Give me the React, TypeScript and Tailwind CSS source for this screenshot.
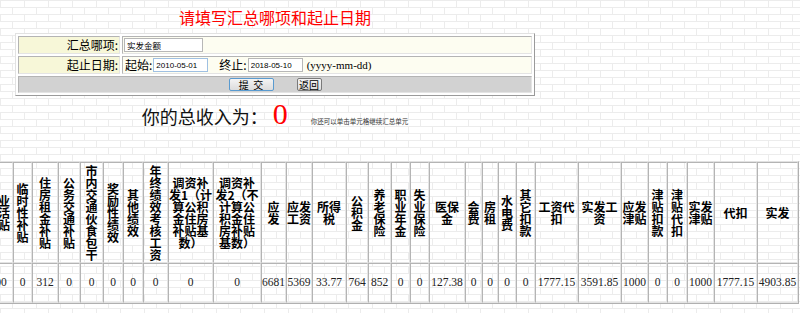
import React from 'react';

const columns = [
  { w: 'w-[30px]', head: '职业|生活|补贴', val: '200' },
  { w: 'w-[19px]', head: '临|时|性|补|贴', val: '0' },
  { w: 'w-[26px]', head: '住|房|租|金|补|贴', val: '312' },
  { w: 'w-[22px]', head: '公|务|交|通|补|贴', val: '0' },
  { w: 'w-[23px]', head: '市|内|交|通|伙|食|包|干', val: '0' },
  { w: 'w-[20px]', head: '奖|励|性|绩|效', val: '0' },
  { w: 'w-[20px]', head: '其|他|绩|效', val: '0' },
  { w: 'w-[25px]', head: '年|终|绩|效|考|核|工|资', val: '0' },
  { w: 'w-[45px]', head: '调资补|发1（计|算公积|金住房|补贴基|数）', val: '0' },
  { w: 'w-[48px]', head: '调资补|发2（不|计算公|积金住|房补贴|基数）', val: '0' },
  { w: 'w-[25px]', head: '应|发', val: '6681' },
  { w: 'w-[26px]', head: '应发|工资', val: '5369' },
  { w: 'w-[34px]', head: '所得|税', val: '33.77' },
  { w: 'w-[22px]', head: '公|积|金', val: '764' },
  { w: 'w-[23px]', head: '养|老|保|险', val: '852' },
  { w: 'w-[19px]', head: '职|业|年|金', val: '0' },
  { w: 'w-[19px]', head: '失|业|保|险', val: '0' },
  { w: 'w-[36px]', head: '医保|金', val: '127.38' },
  { w: 'w-[17px]', head: '会|费', val: '0' },
  { w: 'w-[16px]', head: '房|租', val: '0' },
  { w: 'w-[18px]', head: '水|电|费', val: '0' },
  { w: 'w-[19px]', head: '其|它|扣|款', val: '0' },
  { w: 'w-[43px]', head: '工资代|扣', val: '1777.15' },
  { w: 'w-[43px]', head: '实发工|资', val: '3591.85' },
  { w: 'w-[27px]', head: '应发|津贴', val: '1000' },
  { w: 'w-[19px]', head: '津|贴|扣|款', val: '0' },
  { w: 'w-[20px]', head: '津|贴|代|扣', val: '0' },
  { w: 'w-[27px]', head: '实发|津贴', val: '1000' },
  { w: 'w-[43px]', head: '代扣', val: '1777.15' },
  { w: 'w-[41px]', head: '实发', val: '4903.85' },
];

const cellBorder =
  'border border-t-[#b4b4b4] border-l-[#b4b4b4] border-r-[#e4e4e4] border-b-[#e4e4e4]';

const App: React.FC = () => {
  return (
    <div className="w-[800px] h-[313px] overflow-hidden bg-white bg-[image:linear-gradient(#ececec_1px,transparent_1px),conic-gradient(at_1px_7px,transparent_270deg,#ececec_270deg),conic-gradient(at_1px_7px,transparent_180deg,#ececec_180deg_270deg,transparent_270deg)] bg-[length:24px_7px,24px_14px,24px_14px] bg-[position:0_0,0_0,12px_0] font-['Noto_Sans_CJK_SC','Noto_Sans_CJK_JP',sans-serif] text-black pt-[7px]">
      <div className="ml-[15px] w-[520px]">
        <div className="h-[20px] leading-[20px] text-[16px] text-center text-[#ff0000]">
          请填写汇总哪项和起止日期
        </div>

        <table className="mt-[6px] w-[520px] border-separate border-spacing-[2px] border border-t-[#e2e2e2] border-l-[#e2e2e2] border-r-[#9a9a9a] border-b-[#9a9a9a] bg-white">
          <tbody>
            <tr>
              <td className={`w-[102px] h-[18px] p-0 pr-[1px] text-right text-[12px] leading-none bg-[#f7f7d8] ${cellBorder}`}>
                汇总哪项:
              </td>
              <td className={`h-[18px] p-0 pl-[1px] bg-[#fdfdf1] ${cellBorder}`}>
                <input
                  readOnly
                  value="实发金额"
                  className="block w-[79px] h-[14px] px-[2px] text-[8.5px] bg-white border border-[#b7b7b7] outline-none"
                />
              </td>
            </tr>
            <tr>
              <td className={`h-[18px] p-0 pr-[1px] text-right text-[12px] leading-none bg-[#f7f7d8] ${cellBorder}`}>
                起止日期:
              </td>
              <td className={`h-[18px] p-0 pl-[2px] bg-[#fdfdf1] ${cellBorder}`}>
                <div className="flex items-center text-[12px] leading-none">
                  <span>起始:</span>
                  <input
                    readOnly
                    value="2010-05-01"
                    className="ml-[1px] w-[55px] h-[14px] px-[2px] text-[8px] font-['Liberation_Sans',sans-serif] bg-white border border-[#9fc0e2] outline-none"
                  />
                  <span className="ml-[11px]">终止:</span>
                  <input
                    readOnly
                    value="2018-05-10"
                    className="ml-[1px] w-[55px] h-[14px] px-[2px] text-[8px] font-['Liberation_Sans',sans-serif] bg-white border border-[#b7b7b7] outline-none"
                  />
                  <span className="ml-[4px] text-[11px] font-['Liberation_Serif',serif]">(yyyy-mm-dd)</span>
                </div>
              </td>
            </tr>
            <tr>
              <td colSpan={2} className={`h-[17px] p-0 bg-[#d2d2d2] ${cellBorder}`}>
                <div className="flex justify-center items-center gap-[23px]">
                  <button className="w-[45px] h-[13px] flex items-center justify-center text-[10px] leading-none border border-[#5a9bd0] rounded-[2px] bg-[linear-gradient(#f4f4f4,#dcdcdc)]">
                    提&nbsp;&nbsp;交
                  </button>
                  <button className="w-[25px] h-[13px] flex items-center justify-center text-[10px] leading-none border border-[#7a7a7a] rounded-[2px] bg-[linear-gradient(#f4f4f4,#dcdcdc)]">
                    返回
                  </button>
                </div>
              </td>
            </tr>
          </tbody>
        </table>

        <div className="mt-[3px] h-[30px] flex justify-center items-baseline">
          <span className="text-[18px] leading-[30px] text-[#111]">你的总收入为：</span>
          <span className="ml-[5px] text-[30px] leading-[30px] text-[#ff0000] font-['Liberation_Serif',serif]">0</span>
          <span className="ml-[23px] text-[6.5px] leading-none text-[#333]">你还可以单击单元格继续汇总单元</span>
        </div>
      </div>

      <table className="mt-[32px] ml-[-18px] w-[817px] table-fixed border-separate border-spacing-0 border border-t-[#e2e2e2] border-l-[#e2e2e2] border-r-[#b0b0b0] border-b-[#b0b0b0]">
        <colgroup>
          {columns.map((c, i) => (
            <col key={i} className={c.w} />
          ))}
        </colgroup>
        <thead>
          <tr>
            {columns.map((c, i) => (
              <th
                key={i}
                className={`h-[101px] p-0 align-middle text-center font-bold text-[12px] leading-[12px] whitespace-nowrap ${cellBorder}`}
              >
                {c.head.split('|').map((line, j) => (
                  <div key={j}>{line}</div>
                ))}
              </th>
            ))}
          </tr>
        </thead>
        <tbody>
          <tr>
            {columns.map((c, i) => (
              <td
                key={i}
                className={`h-[40px] p-0 align-middle text-center text-[11.5px] font-['Liberation_Serif',serif] whitespace-nowrap text-[#222] ${cellBorder}`}
              >
                {c.val}
              </td>
            ))}
          </tr>
        </tbody>
      </table>
    </div>
  );
};

export default App;
